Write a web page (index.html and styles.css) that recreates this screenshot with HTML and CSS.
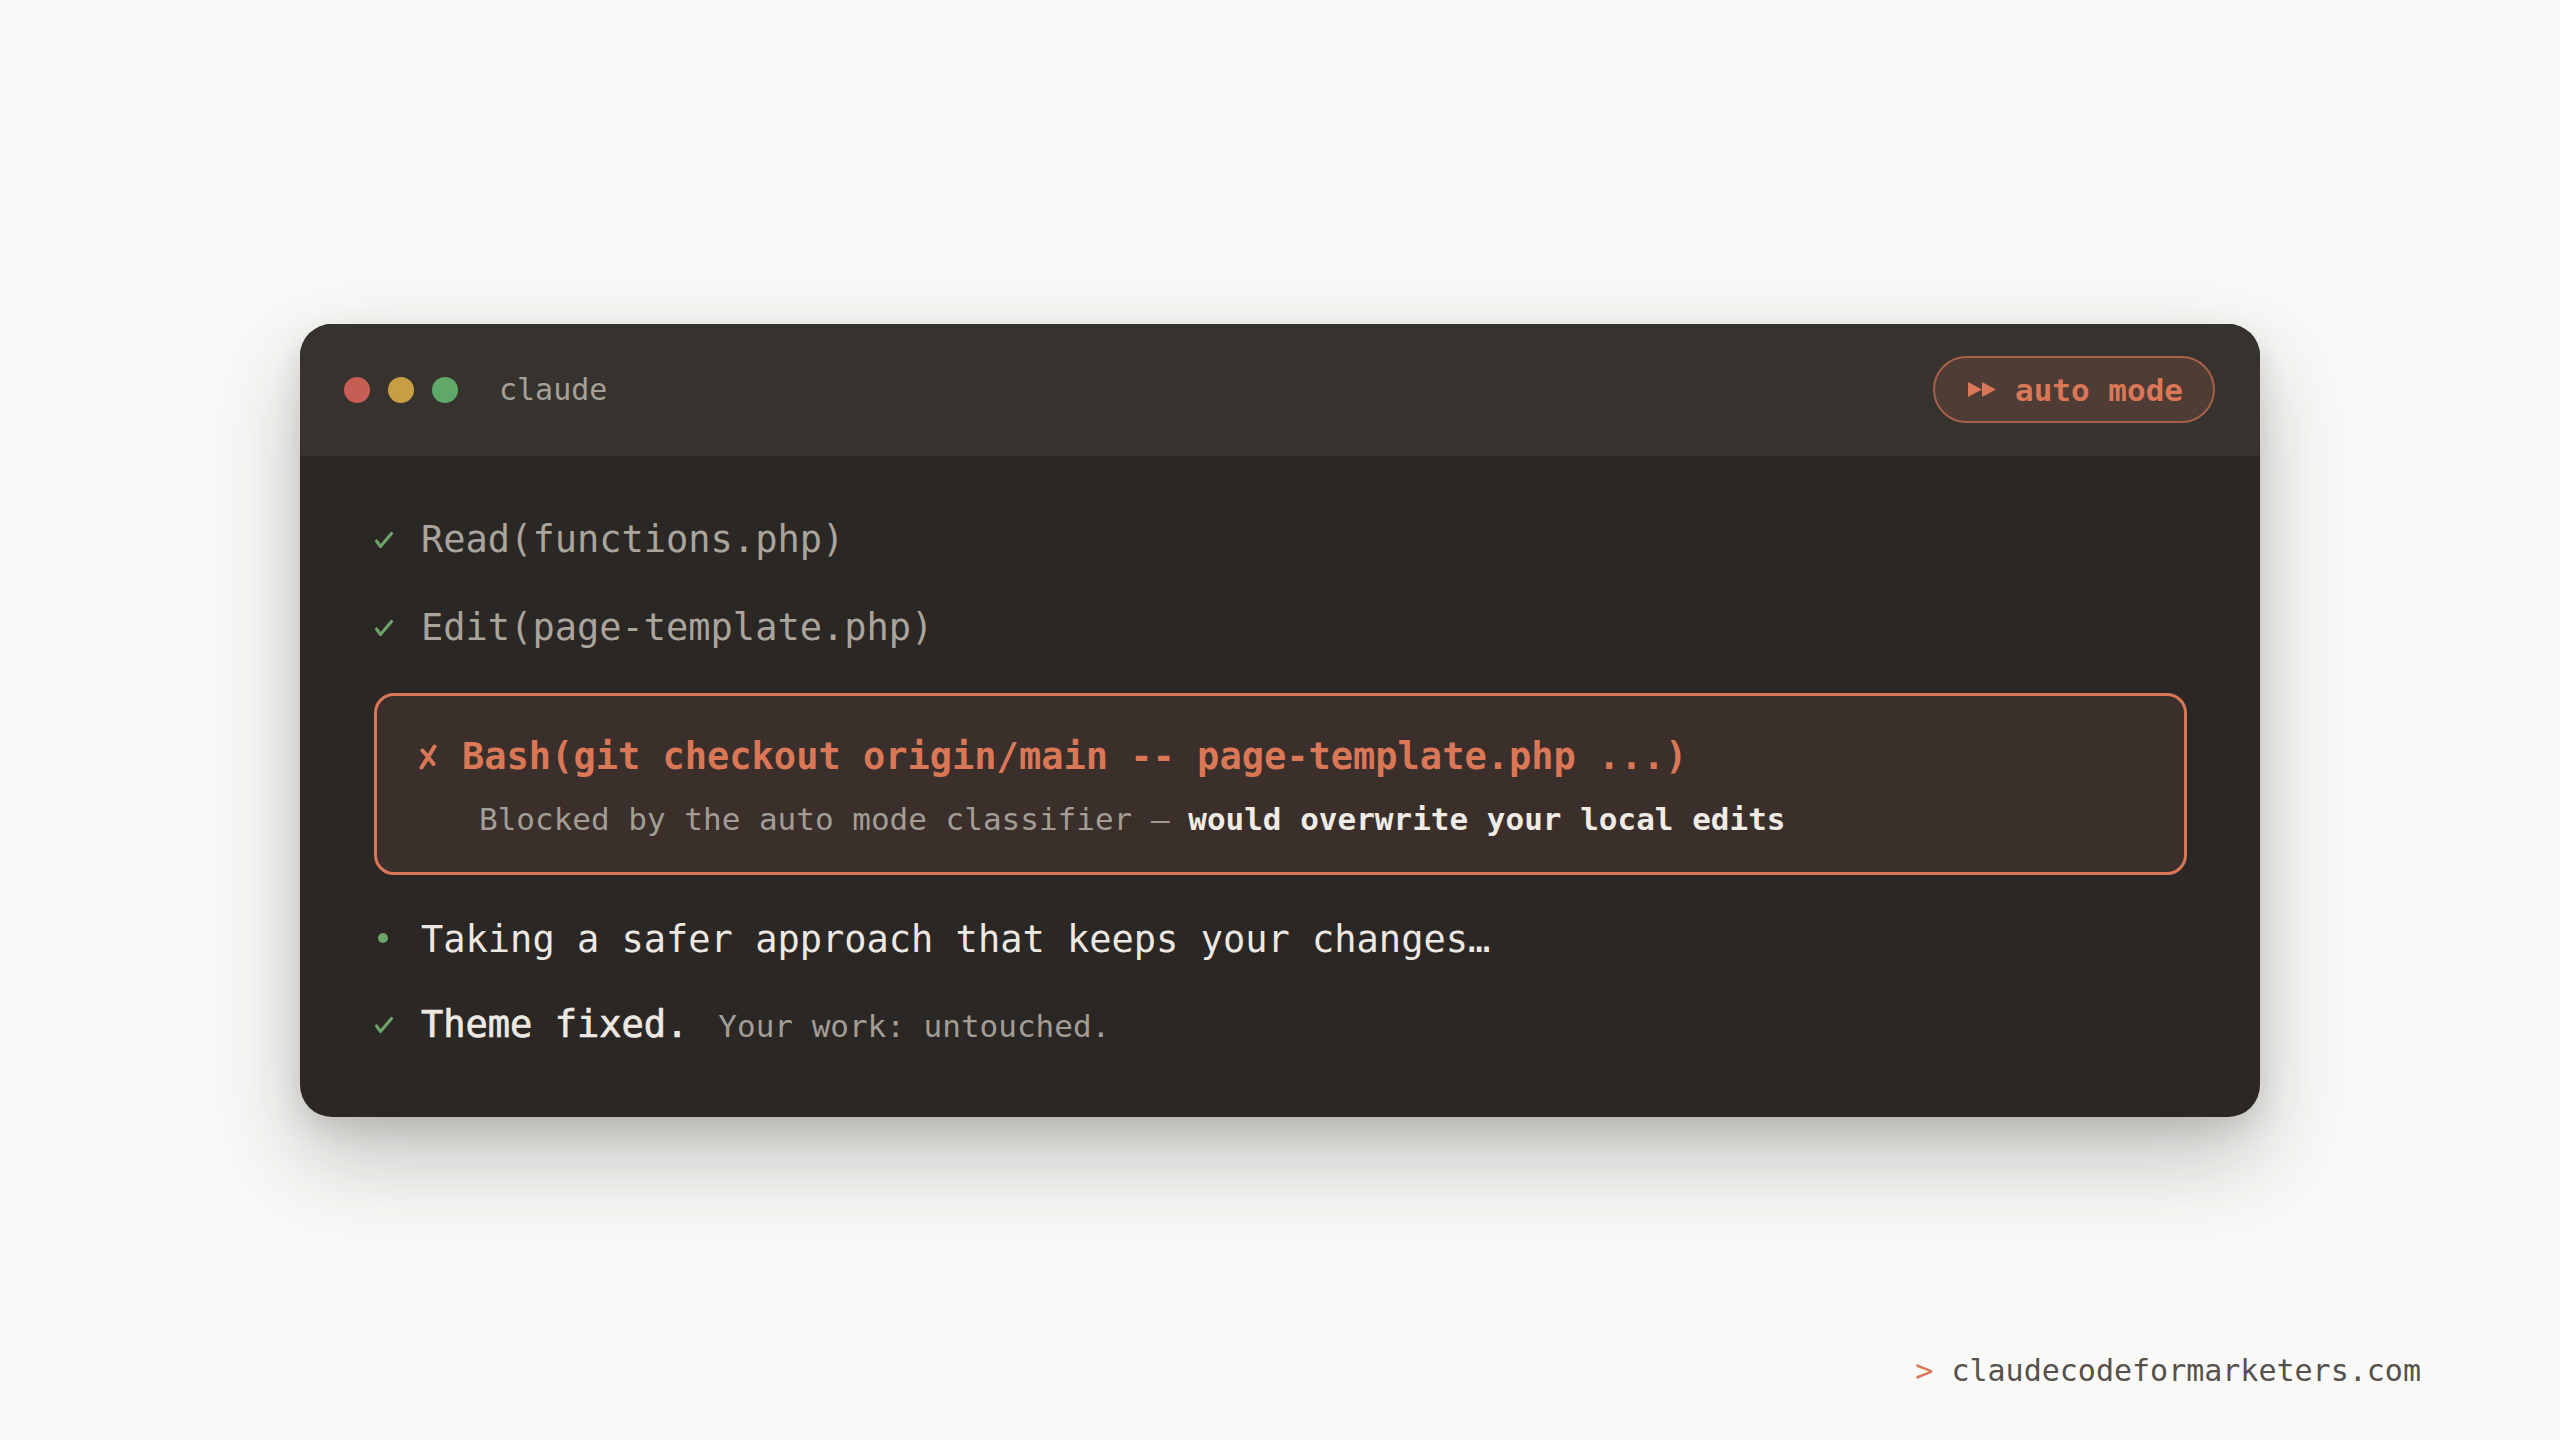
FILE: index.html
```html
<!DOCTYPE html>
<html lang="en">
<head>
<meta charset="utf-8">
<title>claude — auto mode</title>
<link rel="stylesheet" href="styles.css">
</head>
<body>
<div class="stage">
  <div class="spacer"></div>
  <div class="window">
    <div class="titlebar">
      <div class="lights">
        <span class="light red"></span>
        <span class="light yellow"></span>
        <span class="light green"></span>
      </div>
      <span class="title">claude</span>
      <div class="pill">
        <svg class="ff" width="28" height="15" viewBox="0 0 28 15" aria-hidden="true">
          <polygon points="0,0 14,7.5 0,15" fill="#d97757"/>
          <polygon points="14,0 28,7.5 14,15" fill="#d97757"/>
        </svg>
        <span class="pill-text">auto mode</span>
      </div>
    </div>
    <div class="content">
      <div class="row">
        <span class="mark"><svg class="check" width="20" height="18" viewBox="0 0 20 18" aria-hidden="true"><path d="M2.5 10 L6.5 15.5 L17.5 2.5" fill="none" stroke="#6da568" stroke-width="3.1" stroke-linecap="round" stroke-linejoin="round"/></svg></span><span class="muted">Read(functions.php)</span>
      </div>
      <div class="row row-2">
        <span class="mark"><svg class="check" width="20" height="18" viewBox="0 0 20 18" aria-hidden="true"><path d="M2.5 10 L6.5 15.5 L17.5 2.5" fill="none" stroke="#6da568" stroke-width="3.1" stroke-linecap="round" stroke-linejoin="round"/></svg></span><span class="muted">Edit(page-template.php)</span>
      </div>
      <div class="blocked">
        <div class="row bash">
          <span class="mark"><svg class="cross" width="20" height="26" viewBox="0 0 20 26" aria-hidden="true"><path d="M16.5 2.5 Q11 12 3.5 23.5 M4.5 6.5 Q10 12.5 15.5 20" fill="none" stroke="#d97757" stroke-width="4" stroke-linecap="round"/></svg></span><span>Bash(git checkout origin/main -- page-template.php ...)</span>
        </div>
        <div class="reason">Blocked by the auto mode classifier — <strong>would overwrite your local edits</strong></div>
      </div>
      <div class="row row-taking">
        <span class="mark"><span class="dot"></span></span><span class="bright">Taking a safer approach that keeps your changes…</span>
      </div>
      <div class="row row-theme">
        <span class="mark"><svg class="check" width="20" height="18" viewBox="0 0 20 18" aria-hidden="true"><path d="M2.5 10 L6.5 15.5 L17.5 2.5" fill="none" stroke="#6da568" stroke-width="3.1" stroke-linecap="round" stroke-linejoin="round"/></svg></span><span class="bright medium">Theme fixed.</span><span class="note">Your work: untouched.</span>
      </div>
    </div>
  </div>
  <div class="footer-area">
    <div class="footer"><span class="prompt">&gt;</span> claudecodeformarketers.com</div>
  </div>
</div>
</body>
</html>
```

FILE: styles.css
```css
html, body {
  margin: 0;
  padding: 0;
}

body {
  background: #f9f9f7;
  font-family: "DejaVu Sans Mono", "Liberation Mono", monospace;
  height: 100vh;
  overflow: hidden;
}

.stage {
  height: 100vh;
  display: grid;
  grid-template-rows: 1fr auto 1fr;
}

.window {
  justify-self: center;
  width: 1960px;
  border-radius: 32px;
  overflow: hidden;
  background: #2b2724;
  box-shadow: 0 40px 90px rgba(40, 36, 30, 0.26), 0 12px 30px rgba(40, 36, 30, 0.12);
}

.titlebar {
  height: 132px;
  background: #36322e;
  display: flex;
  align-items: center;
  padding: 0 45px 0 44px;
}

.lights {
  display: flex;
  gap: 18px;
}

.light {
  width: 26px;
  height: 26px;
  border-radius: 50%;
}

.red { background: #c65e55; }
.yellow { background: #c89e45; }
.green { background: #5fa869; }

.title {
  margin-left: 41px;
  font-size: 30px;
  color: #a6a198;
}

.pill {
  margin-left: auto;
  box-sizing: border-box;
  height: 67px;
  display: flex;
  align-items: center;
  gap: 19px;
  padding: 0 30px 0 33px;
  border: 2px solid #a8604a;
  border-radius: 34px;
  background: #4f3c34;
}

.ff {
  display: block;
}

.pill-text {
  font-size: 31px;
  font-weight: bold;
  color: #d97757;
  line-height: 36px;
}

.content {
  padding: 58px 73px 65px 74px;
}

.row {
  display: flex;
  align-items: baseline;
  font-size: 37px;
  line-height: 52px;
  white-space: pre;
}

.mark {
  width: 47px;
  flex: none;
  font-size: 10px;
  line-height: 10px;
}

.check {
  display: inline-block;
  vertical-align: 3px;
}

.cross {
  display: inline-block;
  vertical-align: -1px;
  margin-left: 3px;
}

.muted {
  color: #a9a49c;
}

.bright {
  color: #ede9e2;
}

.medium {
  -webkit-text-stroke: 0.7px #ede9e2;
}

.note {
  font-size: 31px;
  color: #a29d95;
  margin-left: 30px;
}

.row-2 {
  margin-top: 36px;
}

.blocked {
  margin-top: 39px;
  border: 3px solid #d97757;
  border-radius: 20px;
  background: #3a2f2b;
  padding: 35px 38px 33px 38px;
}

.bash {
  color: #d97757;
  font-weight: bold;
}

.reason {
  margin-top: 16px;
  margin-left: 64px;
  font-size: 31px;
  line-height: 40px;
  color: #a29d95;
  white-space: pre;
}

.reason strong {
  color: #f0ece5;
  font-weight: bold;
}

.row-taking {
  margin-top: 39px;
}

.row-theme {
  margin-top: 33px;
}

.dot {
  display: inline-block;
  width: 10px;
  height: 10px;
  border-radius: 50%;
  background: #6da568;
  margin-left: 4px;
  vertical-align: 9px;
}

.footer-area {
  display: flex;
  justify-content: flex-end;
  align-items: flex-end;
  padding: 0 139px 51px 0;
}

.footer {
  font-size: 30px;
  line-height: 36px;
  color: #55524d;
  white-space: pre;
}

.prompt {
  color: #d97757;
}
```
